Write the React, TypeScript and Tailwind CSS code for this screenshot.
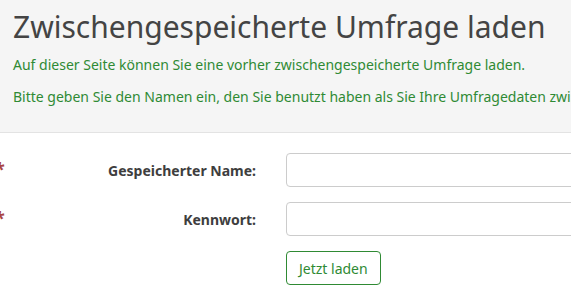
import React from "react";

// Load a previously saved survey: header with intro, then name/password form.
function FieldRow({ label, type }: { label: string; type: string }) {
  return (
    <div className="flex h-[34px] items-center">
      <div className="relative flex h-full w-[256px] shrink-0 items-center justify-end">
        <span className="absolute -left-[5px] top-[7px] text-[18px] font-bold leading-none text-[#a94442]">*</span>
        <label className="whitespace-nowrap text-[14px] font-bold text-[#3e3e3e]">{label}</label>
      </div>
      <input
        type={type}
        className="ml-[30px] h-[34px] w-[400px] shrink-0 rounded-[4px] border border-[#cccccc] bg-white px-3 text-[14px] outline-none"
      />
    </div>
  );
}

export default function App() {
  return (
    <div className="h-[297px] w-[571px] overflow-hidden bg-white font-['Noto_Sans',sans-serif]">
      <div className="h-[133px] border-b border-[#e3e3e3] bg-[#f5f5f5] px-[13px] pt-[5px]">
        <h1 className="whitespace-nowrap text-[30px] leading-[44px] text-[#444444]">Zwischengespeicherte Umfrage laden</h1>
        <p className="mt-[6px] whitespace-nowrap text-[14px] leading-[20px] text-[#2f8a34]">
          Auf dieser Seite können Sie eine vorher zwischengespeicherte Umfrage laden.
        </p>
        <p className="mt-[12px] whitespace-nowrap text-[14px] leading-[20px] text-[#2f8a34]">
          Bitte geben Sie den Namen ein, den Sie benutzt haben als Sie Ihre Umfragedaten zwischengespeichert haben.
        </p>
      </div>
      <div className="flex flex-col gap-[15px] pt-[20px]">
        <FieldRow label="Gespeicherter Name:" type="text" />
        <FieldRow label="Kennwort:" type="password" />
        <div className="pl-[286px]">
          <button
            type="button"
            className="h-[34px] rounded-[4px] border border-[#2f8a34] bg-white px-[12px] text-[14px] text-[#2f8a34]"
          >
            Jetzt laden
          </button>
        </div>
      </div>
    </div>
  );
}
